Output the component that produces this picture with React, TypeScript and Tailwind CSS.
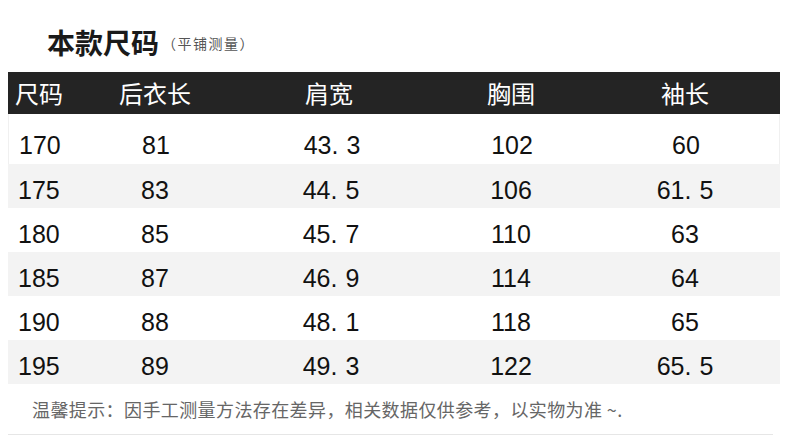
const rows = [
  ['170', '81', '43.3', '102', '60'],
  ['175', '83', '44.5', '106', '61.5'],
  ['180', '85', '45.7', '110', '63'],
  ['185', '87', '46.9', '114', '64'],
  ['190', '88', '48.1', '118', '65'],
  ['195', '89', '49.3', '122', '65.5'],
];

const cols = 'grid grid-cols-[72px_150px_202px_158px_190px]';

function Num({ value }: { value: string }) {
  const [a, b] = value.split('.');
  if (b === undefined) return <span>{a}</span>;
  return (
    <span>
      {a}
      <span className="mr-[8px]">.</span>
      {b}
    </span>
  );
}

export default function App() {
  return (
    <div className="w-[790px] h-[447px] bg-white overflow-hidden font-['Liberation_Sans','Noto_Sans_CJK_SC',sans-serif] text-[#111]">
      {/* Title */}
      <div className="h-[72px] flex items-center pl-[47px] pt-[11px] gap-[3px]">
        <h1 className="text-[28px] font-bold text-[#1a1a1a] font-['Noto_Sans_CJK_SC',sans-serif] leading-none">
          本款尺码
        </h1>
        <span className="text-[14px] text-[#555] font-['Noto_Sans_CJK_SC',sans-serif] mt-[4px] tracking-[1.5px]">（平铺测量）</span>
      </div>

      <div className="mx-[8px] w-[772px]">
        {/* Header */}
        <div className={`${cols} h-[42px] bg-[#242424] text-white text-[24px] font-['Noto_Sans_CJK_SC',sans-serif] items-center`}>
          <div className="pl-[7px]">尺码</div>
          <div className="text-center">后衣长</div>
          <div className="text-center pr-[4px]">肩宽</div>
          <div className="text-center">胸围</div>
          <div className="text-center">袖长</div>
        </div>

        {/* Rows */}
        {rows.map((r, i) => (
          <div
            key={r[0]}
            className={`${cols} items-center text-[25px] leading-none ${
              i === 0 ? 'h-[50px] pt-[13px] border-x border-[#f0f0f0]' : 'h-[44px] pt-[8px]'
            } ${i % 2 === 1 ? 'bg-[#f3f3f3]' : 'bg-white'}`}
          >
            <div className="pl-[10px]">{r[0]}</div>
            <div className="text-center">{r[1]}</div>
            <div className="text-center">
              <Num value={r[2]} />
            </div>
            <div className="text-center">{r[3]}</div>
            <div className="text-center">
              <Num value={r[4]} />
            </div>
          </div>
        ))}

        {/* Footer note */}
        <div className="h-[50px] flex items-center pl-[24px] text-[18px] tracking-[0.4px] text-[#666] font-['Noto_Sans_CJK_SC',sans-serif]">
          温馨提示：因手工测量方法存在差异，相关数据仅供参考，以实物为准 ~.
        </div>
        <div className="h-px w-[765px] bg-[#e6e6e6]" />
      </div>
    </div>
  );
}
